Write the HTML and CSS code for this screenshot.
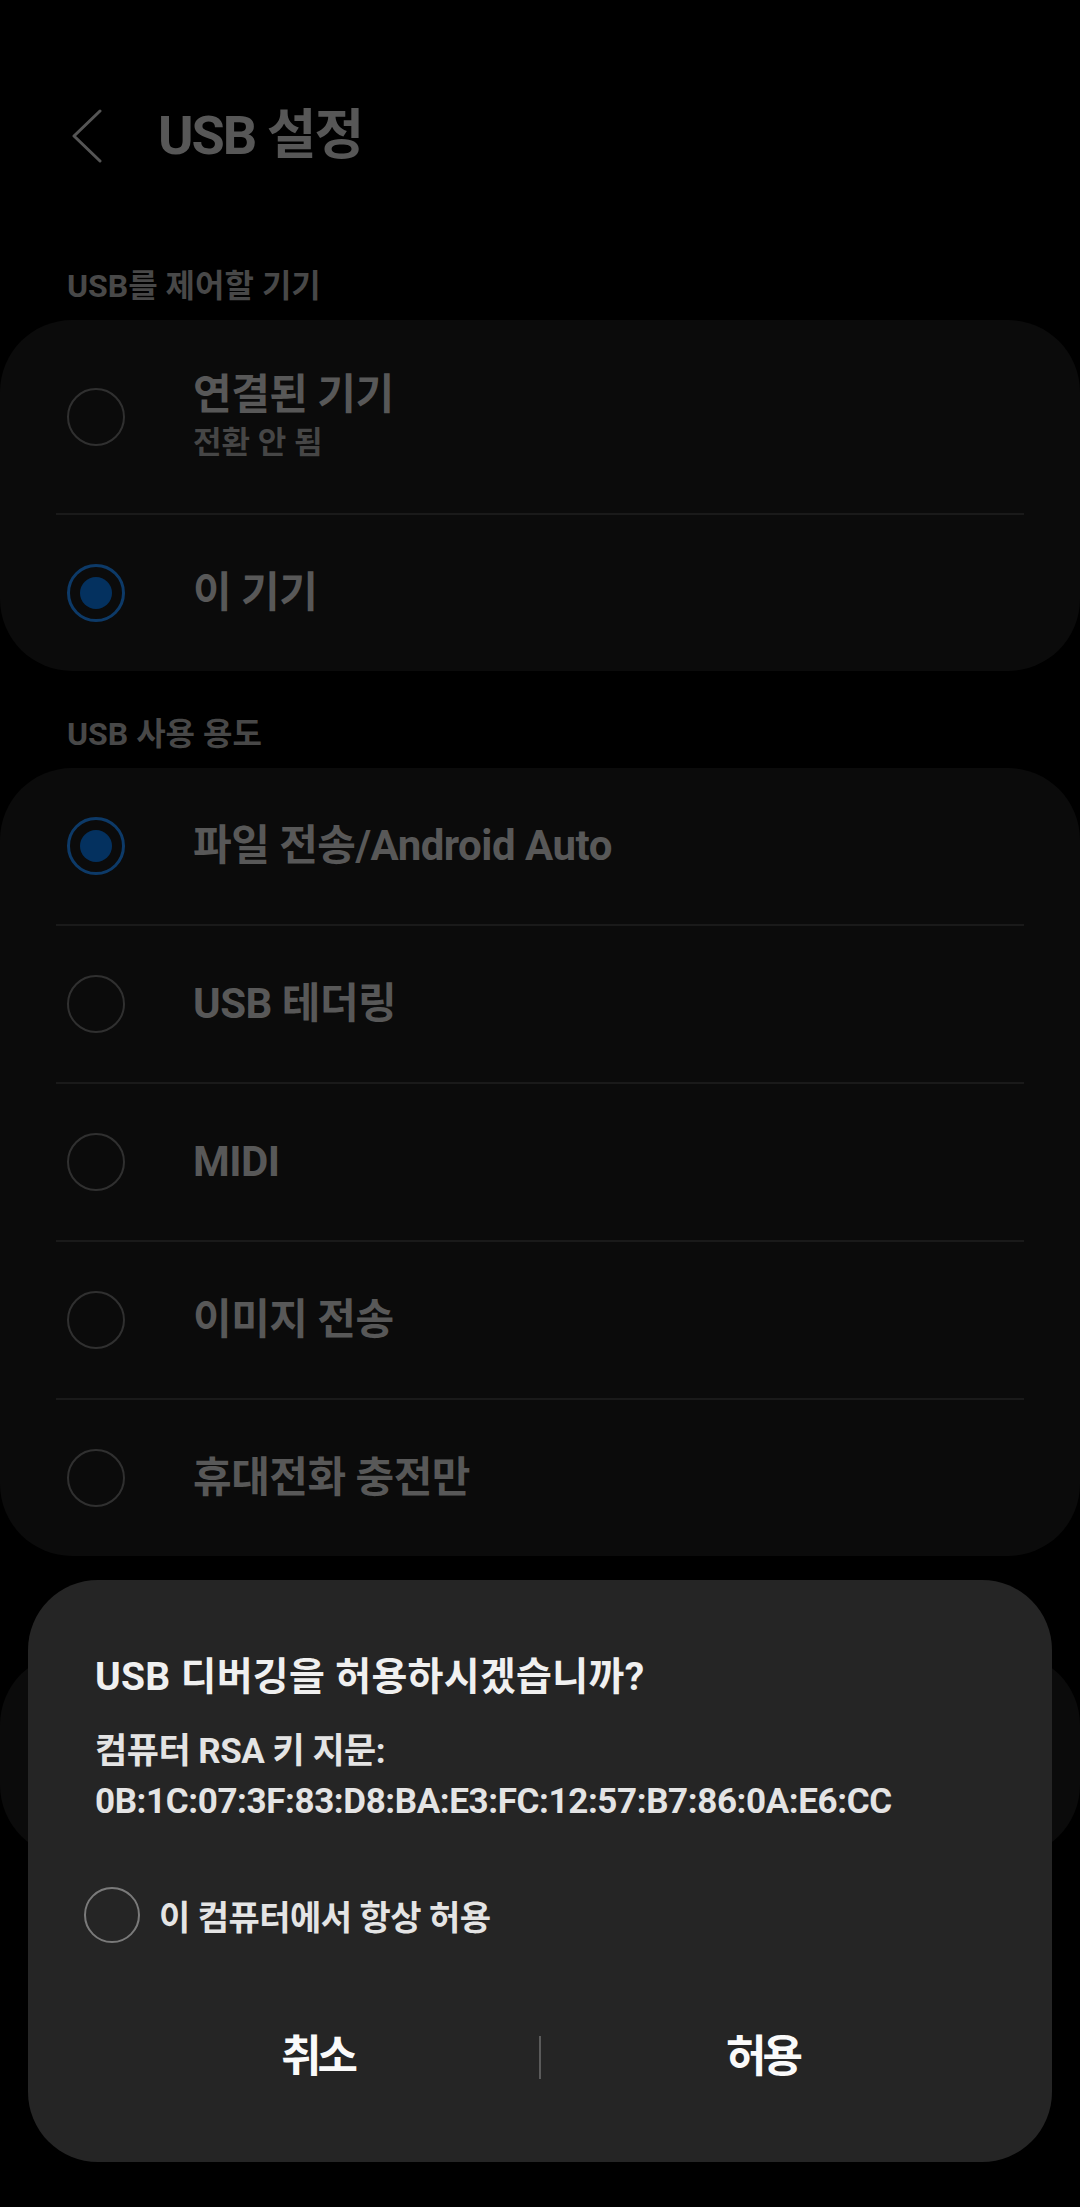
FILE: index.html
```html
<!DOCTYPE html>
<html lang="ko">
<head>
  <meta charset="UTF-8" />
  <meta name="viewport" content="width=device-width, initial-scale=1.0" />
  <title>USB 설정</title>
  <link rel="stylesheet" href="styles.css">
</head>
<body>

<div class="screen">
  <header class="appbar">
    <button class="back" aria-label="뒤로">
      <svg width="30" height="54" viewBox="0 0 30 54">
        <polyline points="28,2 2,27 28,52" fill="none" stroke="#555" stroke-width="3" stroke-linecap="round" stroke-linejoin="round" />
      </svg>
    </button>
    <h1>USB 설정</h1>
  </header>

  <h2 class="group-title">USB를 제어할 기기</h2>
  <div class="card">
    <div class="option two-line">
      <span class="radio"></span>
      <div class="option-text">
        <div class="option-title">연결된 기기</div>
        <div class="option-sub">전환 안 됨</div>
      </div>
    </div>
    <div class="sep"></div>
    <div class="option">
      <span class="radio checked"></span>
      <div class="option-text">
        <div class="option-title">이 기기</div>
      </div>
    </div>
  </div>

  <h2 class="group-title">USB 사용 용도</h2>
  <div class="card">
    <div class="option">
      <span class="radio checked"></span>
      <div class="option-text"><div class="option-title">파일 전송/Android Auto</div></div>
    </div>
    <div class="sep"></div>
    <div class="option">
      <span class="radio"></span>
      <div class="option-text"><div class="option-title">USB 테더링</div></div>
    </div>
    <div class="sep"></div>
    <div class="option">
      <span class="radio"></span>
      <div class="option-text"><div class="option-title">MIDI</div></div>
    </div>
    <div class="sep"></div>
    <div class="option">
      <span class="radio"></span>
      <div class="option-text"><div class="option-title">이미지 전송</div></div>
    </div>
    <div class="sep"></div>
    <div class="option">
      <span class="radio"></span>
      <div class="option-text"><div class="option-title">휴대전화 충전만</div></div>
    </div>
  </div>

  <div class="card peek"></div>
</div>

<div class="dialog">
  <h3 class="dlg-title">USB 디버깅을 허용하시겠습니까?</h3>
  <div class="dlg-body">
    <div class="rsa-label">컴퓨터 RSA 키 지문:</div>
    <div class="rsa-key">0B:1C:07:3F:83:D8:BA:E3:FC:12:57:B7:86:0A:E6:CC</div>
  </div>
  <div class="always">
    <span class="radio"></span>
    <span class="always-text">이 컴퓨터에서 항상 허용</span>
  </div>
  <div class="buttons">
    <button>취소</button>
    <span class="btn-sep"></span>
    <button>허용</button>
  </div>
</div>

</body>
</html>
```

FILE: styles.css
```css
body {
  margin: 0;
  background: #000;
  font-family: Roboto, "Noto Sans CJK KR", sans-serif;
  min-height: 2207px;
  position: relative;
}
.appbar {
  display: flex;
  align-items: center;
  box-sizing: border-box;
  height: 223px;
  padding: 49px 0 0 72px;
}
.back {
  background: none;
  border: none;
  padding: 0;
  display: block;
}
.back svg {
  display: block;
}
.appbar h1 {
  margin: 0 0 0 56px;
  font-size: 54px;
  line-height: 64px;
  font-weight: 700;
  letter-spacing: -2px;
  color: #575757;
}
.group-title {
  margin: 0;
  padding: 43px 67px 14px;
  font-size: 32px;
  line-height: 40px;
  font-weight: 700;
  color: #484848;
}
.card {
  background: #0b0b0b;
  border-radius: 72px;
}
.card.peek {
  margin-top: 97px;
  height: 204px;
}
.option {
  display: flex;
  align-items: center;
  height: 156px;
  padding-left: 67px;
}
.option.two-line {
  height: 193px;
}
.radio {
  flex: none;
  box-sizing: border-box;
  width: 58px;
  height: 58px;
  border-radius: 50%;
  border: 2.5px solid #303030;
}
.radio.checked {
  display: grid;
  place-items: center;
  border: 3px solid #0d3a68;
}
.radio.checked::after {
  content: "";
  width: 32px;
  height: 32px;
  border-radius: 50%;
  background: #04315f;
}
.option-text {
  margin-left: 68px;
}
.option-title {
  font-size: 42px;
  line-height: 52px;
  font-weight: 700;
  letter-spacing: -0.5px;
  color: #585858;
}
.option-sub {
  font-size: 31px;
  line-height: 44px;
  font-weight: 700;
  color: #464646;
}
.sep {
  height: 2px;
  margin: 0 56px;
  background: #1a1a1a;
}

.dialog {
  position: absolute;
  left: 28px;
  top: 1580px;
  width: 1024px;
  height: 582px;
  box-sizing: border-box;
  padding: 72px 56px 0;
  background: #252525;
  border-radius: 70px;
}
.dlg-title {
  margin: 0;
  padding-left: 11px;
  font-size: 39px;
  line-height: 50px;
  font-weight: 700;
  letter-spacing: 0.3px;
  color: #f0f0f0;
}
.dlg-body {
  margin-top: 25px;
  padding-left: 11px;
  font-size: 35px;
  line-height: 50px;
  font-weight: 700;
  color: #e4e4e4;
}
.rsa-label {
  letter-spacing: -0.5px;
}
.rsa-key {
  letter-spacing: -0.4px;
}
.always {
  display: flex;
  align-items: center;
  margin-top: 60px;
}
.always .radio {
  width: 56px;
  height: 56px;
  border-color: #7a7a7a;
}
.always-text {
  margin-left: 19px;
  font-size: 34px;
  font-weight: 700;
  letter-spacing: -0.5px;
  color: #e4e4e4;
}
.buttons {
  display: flex;
  align-items: center;
  height: 90px;
  margin: 69px 12px 0;
}
.buttons button {
  flex: 1;
  padding: 0;
  background: none;
  border: none;
  font-family: inherit;
  font-size: 44px;
  line-height: 90px;
  font-weight: 700;
  letter-spacing: -4px;
  color: #fafafa;
}
.btn-sep {
  width: 2px;
  height: 43px;
  background: #5a5a5a;
}
```
